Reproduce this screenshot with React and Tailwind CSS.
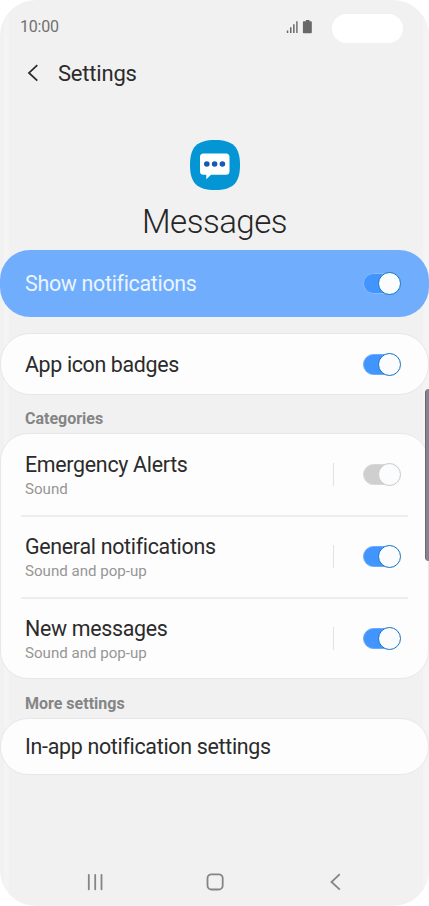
import React from "react";

function Toggle({ off = false, onBlue = false }) {
  const track = off ? "bg-[#cfcfcf]" : "bg-[#4294ff]";
  const ring = onBlue ? "border border-[#85bbff]" : off ? "border border-[#d8d8d8]" : "border border-[#6aabff]";
  const knob = off ? "border-[#c9c9c9]" : "border-[#1272c6]";
  return (
    <div className="flex h-[23px] w-[38px] shrink-0 items-center">
      <div className={`h-[21px] w-[36px] shrink-0 rounded-full ${track} ${ring}`} />
      <div className={`-ml-[21px] size-[23px] shrink-0 rounded-full border bg-[#fafcfd] ${knob}`} />
    </div>
  );
}

function Category({ title, detail, off, last }) {
  return (
    <div className={`mx-5 flex items-center pr-[7px] pb-[2px] pl-1 ${last ? "h-[80px]" : "h-[82px] border-b-2 border-[#ededed]"}`}>
      <div className="flex flex-1 flex-col pt-[5px]">
        <span className="h-6 text-[21.4px] leading-6 tracking-[-0.3px] text-[#2b2b2b]">{title}</span>
        <span className="h-6 text-[15.1px] leading-6 text-[#969696]">{detail}</span>
      </div>
      <div className="mr-[29px] h-[23px] w-px bg-[#e3e3e3]" />
      <Toggle off={off} />
    </div>
  );
}

const card = "border border-[#e7e7e7] bg-[#fdfdfd]";

export default function App() {
  return (
    <div className="h-[906px] w-[429px] overflow-hidden bg-white font-['Roboto',sans-serif]">
      <div className="relative flex h-[906px] flex-col overflow-hidden rounded-[36px] bg-[#f1f1f1]">
        <div className="absolute inset-y-0 left-[4px] w-[5px] bg-[#f4f4f4]" />
        <div className="absolute inset-y-0 right-0 w-[6px] bg-[#f4f4f4]" />

        <header className="relative flex h-[54px] shrink-0 items-center pr-[26px] pl-5">
          <span className="flex-1 text-[16px] leading-5 tracking-[-0.2px] text-[#707070]">10:00</span>
          <svg className="mr-[19px] h-[14px] w-[27px]" viewBox="0 0 27 14" fill="#686868">
            <path d="M.8 10.5h1.5V13H.8zM4 7.3h1.5V13H4zM7.1 4.3h1.5V13H7.1zM10.2 1.3h1.4V13h-1.4z" />
            <path d="M19.900 0h3.600v1.200h1.300c.6 0 1 .4 1 1v10c0 .6-.4 1-1 1h-6.900c-.6 0-1-.4-1-1v-10c0-.6.4-1 1-1h2z" />
          </svg>
          <div className="mt-[2px] h-[29px] w-[71px] rounded-full bg-white" />
        </header>

        <div className="relative flex h-10 shrink-0 items-center">
          <svg className="-mt-[2px] ml-[26px] h-[18px] w-[12px]" viewBox="0 0 12 18" fill="none" stroke="#2b2b2b" strokeWidth="1.8">
            <path d="M11.300 1.200L3 8.900l8.300 7.700" />
          </svg>
          <h1 className="ml-[20px] text-[22px] leading-7 font-normal tracking-[-0.2px] text-[#2b2b2b]">Settings</h1>
        </div>

        <div className="relative mt-[45px] flex h-[111px] shrink-0 flex-col items-center">
          <svg className="mt-px size-[50px]" viewBox="0 0 50 50">
            <path d="M25 0C43 0 50 7 50 25S43 50 25 50 0 43 0 25 7 0 25 0z" fill="#0496d4" />
            <path d="M13.500 13.500h22.500a3.500 3.500 0 0 1 3.500 3.500v14.200a3.500 3.500 0 0 1-3.500 3.500H21l-4.700 4.500v-4.500h-2.800A3.500 3.500 0 0 1 10 31.200V17a3.500 3.500 0 0 1 3.500-3.500z" fill="#fff" />
            <g fill="#1658b4">
              <circle cx="16.800" cy="24" r="2.800" />
              <circle cx="24.600" cy="24" r="2.800" />
              <circle cx="32.400" cy="24" r="2.800" />
            </g>
          </svg>
          <h2 className="mt-3 text-[33px] leading-[39px] font-light tracking-[-0.5px] text-[#252525]">Messages</h2>
        </div>

        <section className="relative flex h-[67px] shrink-0 items-center rounded-[30px] bg-[#71adfd] pr-[28px] pl-[25px]">
          <span className="flex-1 pt-[2px] text-[21.4px] tracking-[-0.3px] text-[#eaf5ff]">Show notifications</span>
          <Toggle onBlue />
        </section>

        <section className={`relative mt-4 flex h-[62px] shrink-0 items-center rounded-[30px] pr-[27px] pl-[24px] ${card}`}>
          <span className="flex-1 pt-[2px] text-[21.4px] tracking-[-0.35px] text-[#2b2b2b]">App icon badges</span>
          <Toggle />
        </section>

        <h3 className="relative flex h-[38px] shrink-0 items-center pt-[10px] pl-[25px] text-[16px] font-bold text-[#858585]">Categories</h3>
        <section className={`relative h-[246px] shrink-0 rounded-[28px] pt-px ${card}`}>
          <Category title="Emergency Alerts" detail="Sound" off />
          <Category title="General notifications" detail="Sound and pop-up" />
          <Category title="New messages" detail="Sound and pop-up" last />
        </section>

        <h3 className="relative flex h-[39px] shrink-0 items-center pt-[11px] pl-[25px] text-[16px] font-bold text-[#858585]">More settings</h3>
        <section className={`relative flex h-[57px] shrink-0 items-center rounded-[28px] pl-[24px] ${card}`}>
          <span className="pt-[2px] text-[21.4px] tracking-[-0.3px] text-[#2b2b2b]">In-app notification settings</span>
        </section>

        <nav className="relative mt-auto flex h-12 shrink-0 items-center pl-[86px]">
          <svg className="h-[18px] w-[18px]" viewBox="0 0 18 18" fill="none" stroke="#858585" strokeWidth="1.800" strokeLinecap="round">
            <path d="M2.800 1.800v14.500M9.200 1.800v14.500M15.500 1.800v14.500" />
          </svg>
          <svg className="ml-[102px] size-[18px]" viewBox="0 0 18 18" fill="none" stroke="#858585" strokeWidth="1.800">
            <rect x="1.500" y="1.300" width="15.200" height="15.200" rx="4" />
          </svg>
          <svg className="ml-[105px] h-[18px] w-[15px]" viewBox="0 0 15 18" fill="none" stroke="#858585" strokeWidth="1.800">
            <path d="M10.800 1.200L2.500 9l8.300 7.700" />
          </svg>
        </nav>
        <div className="absolute top-[389px] right-0 h-[172px] w-[4px] rounded-l-[4px] border-l border-[#696873] bg-[#858391]" />
      </div>
    </div>
  );
}
